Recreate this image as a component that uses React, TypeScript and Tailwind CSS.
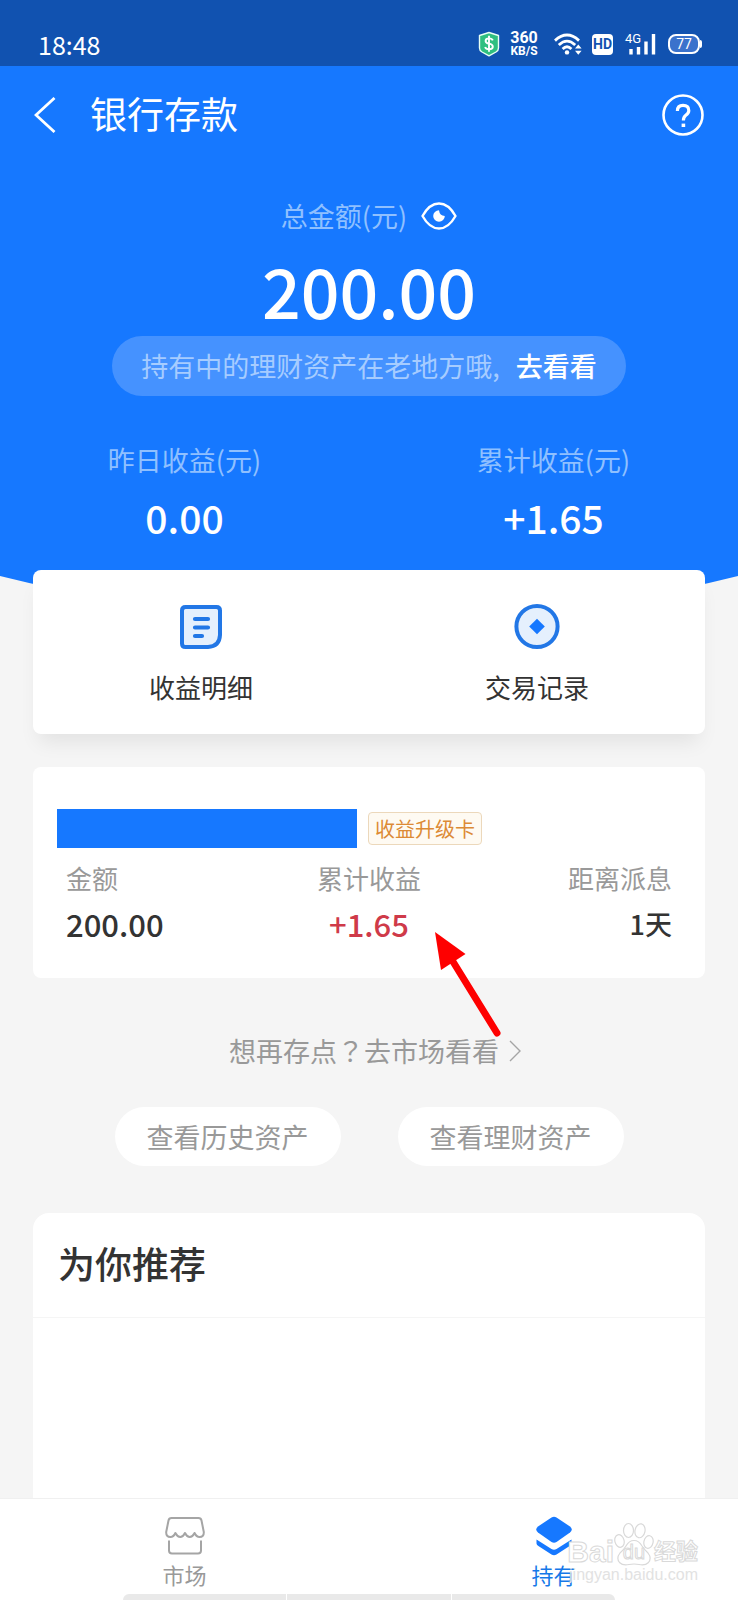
import React from "react";

const CJK = "font-['Noto_Sans_CJK_SC',sans-serif]";

function StatusBar() {
  return (
    <div className="flex h-[66px] items-end justify-between bg-[#1152b0] pr-9 pb-2 pl-[38px] text-white">
      <span className="text-[25px] leading-7 font-normal">18:48</span>
      <div className="flex h-7 items-center">
        <svg className="mr-2.5 h-[26px] w-[22px]" viewBox="0 0 22 26" aria-hidden="true">
          <path d="M11 1.5 L20.5 4.5 V17 Q20.5 19.5 18 21 L11 24.8 L4 21 Q1.5 19.5 1.5 17 V4.5 Z" fill="#2fbf80" stroke="#e8fff4" strokeWidth="1.4" strokeLinejoin="round" />
          <path d="M14.8 9.4 Q14 7.4 11 7.4 Q7.6 7.4 7.6 9.9 Q7.6 12 11 12.6 Q14.8 13.3 14.8 15.7 Q14.8 18.2 11 18.2 Q7.8 18.2 7.1 16 M11 4.8 V20.8" fill="none" stroke="#fff" strokeWidth="1.9" />
        </svg>
        <div className="mr-4 flex w-7 flex-col items-center font-[Roboto,sans-serif] font-bold">
          <span className="text-base leading-[14px]">360</span>
          <span className="text-xs leading-3">KB/S</span>
        </div>
        <svg className="mr-2.5 h-[22px] w-7" viewBox="0 0 28 22" aria-hidden="true">
          <g fill="none" stroke="#fff" strokeWidth="2.8">
            <path d="M1 7.6 Q13 -3.5 25 7.6" />
            <path d="M4.8 12 Q13 4.2 21.2 12" />
            <path d="M8.6 16 Q13 11.6 17.400 16" />
          </g>
          <circle cx="13" cy="19.4" r="2.2" fill="#fff" />
          <path d="M21 15.600 L24.300 11.600 L27.600 15.600 Z M21 17.800 L24.300 21.800 L27.600 17.800 Z" fill="#fff" />
        </svg>
        <span className="mr-3 flex h-[21px] w-[21px] items-center justify-center rounded bg-white font-[Roboto,sans-serif] text-sm leading-5 font-bold text-[#1152b0]">
          HD
        </span>
        <div className="relative mr-3 h-[22px] w-[31px]">
          <span className="absolute top-0 left-0 font-[Roboto,sans-serif] text-[13px] leading-3">4G</span>
          <svg className="h-[22px] w-[31px]" viewBox="0 0 31 22" aria-hidden="true">
            <path d="M6 16 V21.5 M13.500 14 V21.5 M21 8.500 V21.5 M28.5 1 V21.5" stroke="#fff" strokeWidth="3.4" />
          </svg>
        </div>
        <div className="flex items-center">
          <span className="flex h-5 w-8 items-center justify-center rounded-lg border-2 border-white bg-[#3a72cc] font-[Roboto,sans-serif] text-sm leading-4">
            77
          </span>
          <span className="h-2 w-0.5 rounded-r bg-white" />
        </div>
      </div>
    </div>
  );
}

function Header() {
  return (
    <header className="flex h-[98px] items-center px-[34px] text-white">
      <button type="button" aria-label="返回" className="flex w-14 items-center">
        <svg className="h-9 w-[22px]" viewBox="0 0 22 36" fill="none" stroke="currentColor" strokeWidth="2.8" aria-hidden="true">
          <path d="M20.5 1 L2 18 L20.5 35" />
        </svg>
      </button>
      <h1 className="flex-1 pb-1 text-[37px] leading-[48px] font-normal">银行存款</h1>
      <button type="button" aria-label="帮助">
        <svg className="size-[42px]" viewBox="0 0 42 42" fill="none" stroke="currentColor" strokeWidth="2.6" aria-hidden="true">
          <circle cx="21" cy="21" r="19.5" />
          <path d="M15.400 17 Q15.400 11.400 21 11.400 Q26.800 11.400 26.800 16.400 Q26.800 19 23.800 21.200 Q21.400 23 21.400 26.600" strokeWidth="3.200" />
          <path d="M21.4 29.6 V33" strokeWidth="3.6" />
        </svg>
      </button>
    </header>
  );
}

function Summary() {
  return (
    <section className="flex flex-col items-center pt-8 text-white">
      <div className="flex h-10 items-center gap-3.5">
        <span className="text-[27px] leading-10 text-[#8fc0ff]">总金额(元)</span>
        <button type="button" aria-label="隐藏金额">
          <svg className="h-[30px] w-9" viewBox="0 0 36 30" aria-hidden="true">
            <path d="M1.5 15 Q8.5 2.5 18 2.5 Q27.5 2.5 34.5 15 Q27.5 27.5 18 27.5 Q8.5 27.5 1.5 15 Z" fill="none" stroke="#fff" strokeWidth="2.4" strokeLinejoin="round" />
            <path d="M18 9.2 A5.8 5.8 0 1 0 23.8 15 Q18.6 14.6 18 9.2 Z" fill="#fff" />
          </svg>
        </button>
      </div>
      <p className="mt-3 mb-1 text-[68px] leading-[84px] font-medium">200.00</p>
      <div className="flex h-[60px] items-center gap-4 rounded-full bg-[#4592ff] px-[29px] text-[27px] leading-10 whitespace-nowrap">
        <span className="text-[#a6ccff]">持有中的理财资产在老地方哦,</span>
        <a href="#wealth" className="font-medium">去看看</a>
      </div>
      <dl className="mt-11 grid w-full grid-cols-2 text-center">
        {[
          ["昨日收益(元)", "0.00"],
          ["累计收益(元)", "+1.65"],
        ].map(([label, value]) => (
          <div key={label}>
            <dt className="text-[27px] leading-10 text-[#8fc0ff]">{label}</dt>
            <dd className="mt-3 text-[39px] leading-[50px] font-medium">{value}</dd>
          </div>
        ))}
      </dl>
    </section>
  );
}

function Shortcuts() {
  return (
    <nav className="relative mx-[33px] -mt-[30px] grid h-[164px] grid-cols-2 rounded-lg bg-white shadow-[0_14px_20px_-6px_rgba(0,0,0,0.08)]">
      <a href="#earnings" className="flex flex-col items-center pt-8 text-[26px] leading-10 text-[#333]">
        <svg className="size-12" viewBox="0 0 48 48" aria-hidden="true">
          <path d="M8.500 5 H39.500 Q43 5 43 8.500 V33 Q42.5 44.5 31 45 H8.500 Q5 45 5 41.500 V8.500 Q5 5 8.500 5 Z" fill="#e5f0fd" stroke="#2277e6" strokeWidth="4" />
          <path d="M18 17 H31 M18 25.5 H31 M18 34 H25" stroke="#2277e6" strokeWidth="4.200" strokeLinecap="round" />
        </svg>
        <span className="mt-[17px]">收益明细</span>
      </a>
      <a href="#records" className="flex flex-col items-center pt-8 text-[26px] leading-10 text-[#333]">
        <svg className="size-12" viewBox="0 0 48 48" aria-hidden="true">
          <circle cx="24" cy="24.5" r="20.6" fill="#e5f0fd" stroke="#2277e6" strokeWidth="4" />
          <path d="M24 16.7 L31.8 24.5 L24 32.3 L16.2 24.5 Z" fill="#1678ff" />
        </svg>
        <span className="mt-[17px]">交易记录</span>
      </a>
    </nav>
  );
}

function Deposit() {
  return (
    <section className="relative mx-[33px] mt-[33px] h-[211px] rounded-lg bg-white px-6 pt-[42px]">
      <div className="flex items-center gap-[11px]">
        <span className="h-[39px] w-[300px] bg-[#1678ff]" />
        <span className="rounded-sm border border-[#ecd8bb] bg-[#fefaf2] px-1.5 text-xl leading-[31px] text-[#dc8a35]">
          收益升级卡
        </span>
      </div>
      <dl className="grid grid-cols-3 px-[9px] pt-2.5 text-[#333]">
        <div>
          <dt className="text-[26px] leading-10 text-[#999]">金额</dt>
          <dd className="mt-1.5 text-[31px] leading-10 font-medium">200.00</dd>
        </div>
        <div className="text-center">
          <dt className="text-[26px] leading-10 text-[#999]">累计收益</dt>
          <dd className="mt-1.5 text-[31px] leading-10 font-medium text-[#cf3a49]">+1.65</dd>
        </div>
        <div className="text-right">
          <dt className="text-[26px] leading-10 text-[#999]">距离派息</dt>
          <dd className="mt-1.5 text-[27px] leading-10 font-medium">1天</dd>
        </div>
      </dl>
      <svg className="absolute top-[163px] left-[399px] z-10 h-[108px] w-[72px]" viewBox="0 0 72 108" aria-hidden="true">
        <path d="M3 2 L33.5 24 L9 40 Z" fill="#fe0000" />
        <path d="M20 30 L65 103" stroke="#fe0000" strokeWidth="7" strokeLinecap="round" />
      </svg>
    </section>
  );
}

function Links() {
  return (
    <div className="text-[27px] leading-10 text-[#999]">
      <a href="#market" className="mt-[53px] flex items-center justify-center gap-2.5">
        <span className="pl-3">
          想再存点<span className="font-['Noto_Sans_CJK_TC',sans-serif]" lang="zh-Hant">？</span>去市场看看
        </span>
        <svg className="h-[22px] w-3" viewBox="0 0 12 22" fill="none" stroke="#a5a5a5" strokeWidth="1.4" aria-hidden="true">
          <path d="M1 1 L11 11 L1 21" />
        </svg>
      </a>
      <div className="mt-9 flex justify-center gap-[57px]">
        <a href="#history" className="rounded-full bg-white px-8 leading-[59px]">查看历史资产</a>
        <a href="#assets" className="rounded-full bg-white px-8 leading-[59px]">查看理财资产</a>
      </div>
    </div>
  );
}

function Watermark() {
  return (
    <div className="pointer-events-none absolute right-10 bottom-4 flex flex-col items-end font-['Liberation_Sans','Noto_Sans_CJK_SC',sans-serif]">
      <div className="flex items-end text-white [-webkit-text-stroke:1px_#d9d9d9]">
        <span className="text-3xl leading-7 font-bold">Bai</span>
        <span className="relative flex h-11 w-10 items-end justify-center">
          <svg className="absolute inset-0 h-11 w-10" viewBox="0 0 40 44" fill="#fff" stroke="#d9d9d9" strokeWidth="1.2" aria-hidden="true">
            <ellipse cx="5.5" cy="19" rx="4.6" ry="6.4" transform="rotate(-15 5.5 19)" />
            <ellipse cx="14.5" cy="8.5" rx="5" ry="7" />
            <ellipse cx="26" cy="8.8" rx="5" ry="7" transform="rotate(12 26 8.8)" />
            <ellipse cx="34.5" cy="20" rx="4.6" ry="6.4" transform="rotate(12 34.5 20)" />
            <path d="M20 18.5 Q25 18.5 28 24 Q30 27 34 31 Q38 36 34.5 40.5 Q31 44 25 42.5 Q20 41.5 15 42.5 Q9 44 5.5 40.5 Q2 36 6 31 Q10 27.5 12 24 Q15 18.5 20 18.5 Z" />
          </svg>
          <span className="relative text-xl leading-7">du</span>
        </span>
        <span className="text-[22px] leading-7 font-bold">经验</span>
      </div>
      <span className="text-base leading-[18px] text-[#e2e2e2]">jingyan.baidu.com</span>
    </div>
  );
}

function TabBar() {
  return (
    <footer className="relative flex h-[102px] shrink-0 flex-col items-center justify-between border-t border-[#f0f0f0] bg-white">
      <nav className="grid w-full grid-cols-2 pt-[17px] text-[22px] leading-7">
        <a href="#market" className="flex flex-col items-center gap-1 text-[#999]">
          <svg className="h-10 w-10" viewBox="0 0 40 40" fill="none" stroke="#a5a5a5" strokeWidth="2" strokeLinejoin="round" aria-hidden="true">
            <path d="M6.5 2 H33.5 Q36 2 36.5 4.5 L38.8 16 Q39 21 34.5 21 Q31.500 21 29.600 17 Q27.5 21 24.8 21 Q22 21 20 17 Q18 21 15.2 21 Q12.5 21 10.4 17 Q8.5 21 5.5 21 Q1 21 1.2 16 L3.5 4.5 Q4 2 6.5 2 Z" />
            <path d="M4 24.5 V34.5 Q4 37.5 7 37.5 H33 Q36 37.5 36 34.5 V24.5" />
          </svg>
          <span>市场</span>
        </a>
        <a href="#holdings" aria-current="page" className="flex flex-col items-center gap-1 text-[#1678e8]">
          <svg className="h-10 w-10" viewBox="0 0 40 40" fill="#1678ff" aria-hidden="true">
            <path d="M17.5 1.5 Q20 0 22.5 1.5 L36 10.5 Q39.5 13.5 36 16.5 L22.5 26 Q20 27.5 17.5 26 L4 16.5 Q0.5 13.5 4 10.5 Z" />
            <path d="M2.5 23.5 L17.5 33 Q20 34.5 22.5 33 L37.5 23.5 V27.5 Q37.3 28.8 36 29.8 L22.5 38.5 Q20 40 17.5 38.5 L4 29.8 Q2.7 28.8 2.5 27.5 Z" />
          </svg>
          <span>持有</span>
        </a>
      </nav>
      <div className="flex h-1.5 w-2/3 gap-px overflow-hidden rounded-t-md">
        <span className="flex-1 bg-[#e9e9e9]" />
        <span className="flex-1 bg-[#e9e9e9]" />
        <span className="flex-1 bg-[#e9e9e9]" />
      </div>
      <Watermark />
    </footer>
  );
}

export default function App() {
  return (
    <div className={`flex min-h-screen flex-col bg-[#f5f5f5] ${CJK}`}>
      <StatusBar />
      <div className="h-[510px] bg-[#1678ff]">
        <Header />
        <Summary />
      </div>
      <svg className="h-6 w-full shrink-0" viewBox="0 0 738 24" preserveAspectRatio="none" fill="#1678ff" aria-hidden="true">
        <path d="M0 0 H738 Q554 46 369 46 Q184 46 0 0 Z" />
      </svg>
      <Shortcuts />
      <Deposit />
      <Links />
      <section className="mx-[33px] mt-[47px] flex-1 rounded-t-2xl bg-white">
        <h2 className="border-b border-[#f5f5f5] px-[25px] pt-[26px] pb-[30px] text-[37px] leading-[48px] font-medium text-[#333]">
          为你推荐
        </h2>
      </section>
      <TabBar />
    </div>
  );
}
